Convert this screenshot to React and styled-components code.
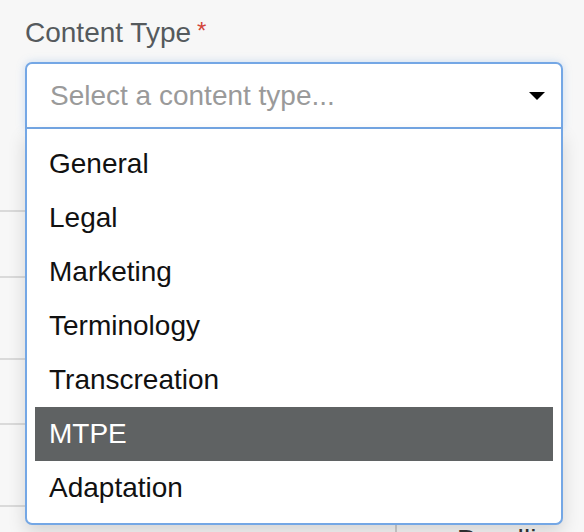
import styled, { createGlobalStyle } from "styled-components";

const GlobalStyle = createGlobalStyle`
  html, body {
    margin: 0;
    height: 100%;
    overflow: hidden;
    background: #f7f7f7;
  }
  body {
    font-family: "Liberation Sans", Arial, sans-serif;
  }
`;

const Page = styled.div`
  position: relative;
  width: 584px;
  height: 532px;
  overflow: hidden;
`;

const Field = styled.div`
  position: relative;
  z-index: 2;
  padding: 16px 0 0 25px;
`;

const Label = styled.div`
  font-size: 28px;
  line-height: 34px;
  color: #555a5d;
  margin-bottom: 12px;
`;

const Required = styled.span`
  color: #d2453b;
  font-size: 24px;
  margin-left: 6px;
  vertical-align: top;
  line-height: 30px;
`;

const SelectWrap = styled.div`
  position: relative;
  width: 538px;
`;

const Control = styled.div`
  height: 67px;
  box-sizing: border-box;
  border: 2px solid #74a7e5;
  border-radius: 7px 7px 0 0;
  background: #fff;
  display: flex;
  align-items: center;
  justify-content: space-between;
  padding: 0 16px 0 23px;
  box-shadow: 0 0 8px rgba(116, 167, 229, 0.35);
`;

const Placeholder = styled.span`
  font-size: 28px;
  color: #9a9a9a;
`;

const Menu = styled.ul`
  position: absolute;
  top: 100%;
  left: 0;
  right: 0;
  margin: 0;
  list-style: none;
  padding: 8px;
  background: #fff;
  border: 2px solid #74a7e5;
  border-top: none;
  border-radius: 0 0 7px 7px;
  box-shadow: 0 8px 18px rgba(0, 0, 0, 0.14);
`;

const Option = styled.li`
  height: 54px;
  display: flex;
  align-items: center;
  padding-left: 14px;
  font-size: 28px;
  color: ${(p) => (p.$active ? "#ffffff" : "#111111")};
  background: ${(p) => (p.$active ? "#5f6263" : "transparent")};
`;

const Table = styled.div`
  margin-top: 81px;
  margin-right: 30px;
`;

const Row = styled.div`
  height: ${(p) => p.$h}px;
  box-sizing: border-box;
  border-top: 2px solid #dadada;
  display: flex;
`;

const Cell = styled.div`
  width: ${(p) => p.$w || "auto"};
  flex: ${(p) => (p.$w ? "none" : 1)};
  border-right: ${(p) => (p.$divider ? "2px solid #cfcfcf" : "none")};
  padding: 17px 0 0 60px;
  font-size: 28px;
  line-height: 32px;
  color: #333;
  box-sizing: border-box;
`;

const options = [
  "General",
  "Legal",
  "Marketing",
  "Terminology",
  "Transcreation",
  "MTPE",
  "Adaptation",
];

const Arrow = () => (
  <svg width="16" height="8" viewBox="0 0 16 8">
    <polygon points="0,0 16,0 8,8" fill="#000" />
  </svg>
);

const App = () => {
  return (
    <Page>
      <GlobalStyle />
      <Field>
        <Label>
          Content Type<Required>*</Required>
        </Label>
        <SelectWrap>
          <Control>
            <Placeholder>Select a content type...</Placeholder>
            <Arrow />
          </Control>
          <Menu>
            {options.map((o) => (
              <Option key={o} $active={o === "MTPE"}>
                {o}
              </Option>
            ))}
          </Menu>
        </SelectWrap>
      </Field>
      <Table>
        <Row $h={66} />
        <Row $h={82} />
        <Row $h={65} />
        <Row $h={82} />
        <Row $h={60}>
          <Cell $w="397px" $divider />
          <Cell>Deadline</Cell>
        </Row>
      </Table>
    </Page>
  );
};

export default App;
